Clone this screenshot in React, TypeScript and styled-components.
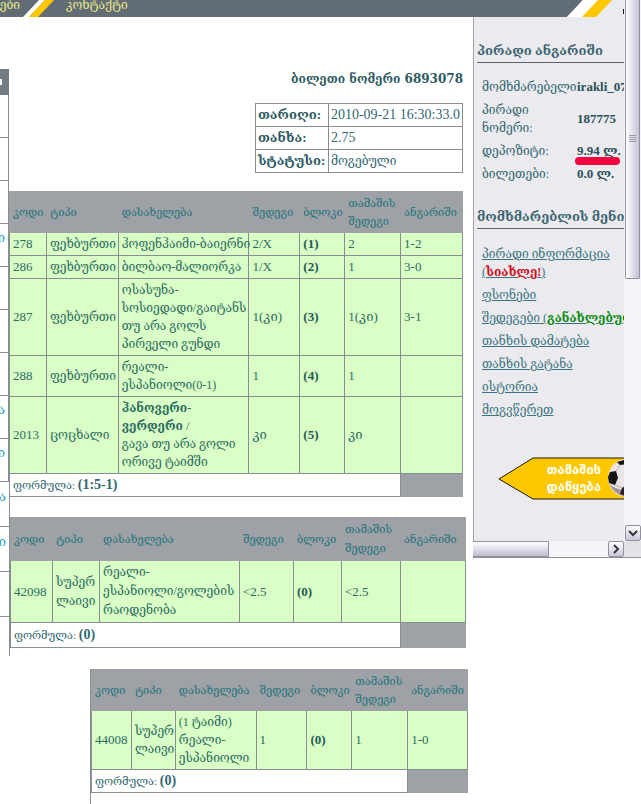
import React from 'react';
import styled, { createGlobalStyle } from 'styled-components';

const Global = createGlobalStyle`
  * { box-sizing: border-box; }
  body {
    margin: 0;
    background: #fff;
    color: #32676f;
    font-family: "Liberation Serif", "DejaVu Serif", serif;
    font-size: 13px;
    line-height: 18px;
    overflow-x: hidden;
  }
`;

const line = '#868e94';

const Page = styled.div`
  display: flex;
  align-items: flex-start;
`;

const Left = styled.div`
  flex: 1;
  min-width: 0;
`;

const Nav = styled.nav`
  display: flex;
  height: 17px;
  background: #626c74;
  overflow: hidden;
`;

const NavLink = styled.a<{ $cut?: boolean }>`
  display: flex;
  justify-content: ${p => (p.$cut ? 'flex-end' : 'flex-start')};
  width: ${p => (p.$cut ? '20px' : 'auto')};
  margin-left: ${p => (p.$cut ? '0' : '12px')};
  color: #e9e88a;
  font-size: 12px;
  line-height: 10px;
  text-decoration: none;
  white-space: nowrap;
`;

const Slash = styled.svg`
  display: block;
  flex: none;
`;

const Body = styled.div`
  display: flex;
`;

const Strip = styled.div`
  flex: 0 0 9px;
  width: 9px;
  padding-top: 52px;
`;

const StripHead = styled.div`
  display: flex;
  justify-content: flex-start;
  align-items: center;
  height: 26px;
  background: #747c83;

  &::before {
    content: '';
    width: 2px;
    height: 6px;
    background: #fff;
  }
`;

const StripCell = styled.div<{ $tall?: boolean }>`
  display: flex;
  align-items: center;
  justify-content: flex-end;
  width: ${p => (p.$tall ? '10px' : '9px')};
  height: ${p => (p.$tall ? '45px' : '43px')};
  padding: 0 3px 14px 0;
  border-right: 1px solid ${line};
  border-bottom: 1px solid ${line};
  color: #2aa0b8;
  overflow: hidden;
  &:last-child { border-bottom: 0; height: 39px; }
`;

const Main = styled.main`
  flex: 1;
  min-width: 0;
  padding-top: 53px;
`;

const Title = styled.h1`
  margin: 0 10px 15px;
  font-family: "DejaVu Serif", serif;
  font-size: 12px;
  line-height: 18px;
  font-weight: bold;
  text-align: right;
  color: #2d5a63;
`;

const Info = styled.table`
  margin: 0 10px 18px auto;
  border-collapse: collapse;

  th, td {
    padding: 2px;
    border: 1px solid ${line};
    text-align: left;
    white-space: nowrap;
  }
  th { width: 73px; color: #2d5a63; }
  td { font-size: 12px; }
`;

const DateText = styled.time`
  font-size: 14px;
`;

const Block = styled.section<{ $indent?: number; $right: number; $after: number }>`
  padding-right: ${p => p.$right}px;
  padding-bottom: ${p => p.$after}px;
  margin-left: ${p => p.$indent ?? 0}px;
`;

const LinedBlock = styled(Block)`
  border-left: 1px solid ${line};
`;

const Ticket = styled.table<{ $line?: number }>`
  width: 100%;
  table-layout: fixed;
  border-collapse: collapse;
  font-size: 12px;
  line-height: ${p => p.$line ?? 18}px;
`;

const Col = styled.col<{ $share: number }>`
  width: ${p => p.$share * 100}%;
`;

const Th = styled.th`
  padding: 2px 3px;
  border: 1px solid #9ea2a6;
  background: #9ea2a6;
  color: #23737d;
  font-size: 11px;
  font-weight: normal;
  text-align: left;
  white-space: pre-line;
`;

const Td = styled.td<{ $bold?: boolean; $num?: boolean }>`
  padding: 2px 3px;
  border: 1px solid ${line};
  background: #d9ffc6;
  font-size: ${p => (p.$num ? 13 : 12)}px;
  font-weight: ${p => (p.$bold ? 'bold' : 'normal')};
  color: ${p => (p.$bold ? '#235a53' : '#2c6b5f')};
  white-space: pre;
`;

const Formula = styled.td`
  padding: 2px 3px;
  border: 1px solid ${line};
  font-size: 11px;

  b { font-size: 14px; }
`;

const Blank = styled.td`
  border: 1px solid #9ea2a6;
  background: #9ea2a6;
`;

const Frame = styled.aside`
  display: grid;
  grid-template-columns: minmax(0, 1fr) 17px;
  flex: 0 0 168px;
  border-bottom: 1px solid #8f8f98;
`;

const View = styled.div`
  min-width: 0;
  overflow: hidden;
  background: #ebebef;
`;

const Banner = styled.svg`
  display: block;
  width: 100%;
  height: 17px;
`;

const Panel = styled.div`
  padding: 25px 0 41px 3px;
  border-left: 1px solid #a2a3a9;
  white-space: nowrap;
`;

const Heading = styled.h2`
  margin: 0 0 13px;
  padding: 0 0 2px;
  border-bottom: 1px solid #59636c;
  color: #3d6470;
  font-size: 13px;
  line-height: 18px;
`;

const Account = styled.table`
  width: 100%;
  margin-bottom: 22px;
  border-collapse: collapse;
  table-layout: fixed;

  th {
    width: 100px;
    padding: 2px 0 3px 5px;
    font-weight: normal;
    text-align: left;
    font-size: 12px;
  }
  td {
    padding: 2px 0 3px;
    font-weight: bold;
    color: #2c4f5a;
  }
`;

const Marked = styled.span`
  position: relative;
  &::after {
    content: '';
    position: absolute;
    left: -2px;
    top: 14px;
    width: 45px;
    height: 8px;
    border-radius: 4px;
    background: #f5053f;
  }
`;

const Menu = styled.ul`
  margin: 14px 0 35px;
  padding: 0 0 0 5px;
  list-style: none;
  font-size: 12px;

  li { padding: 2px 0 3px; }
`;

const MenuLink = styled.a`
  color: #3a7480;
  text-decoration: underline;
  white-space: pre;
`;

const Tag = styled.b<{ $tone: string }>`
  color: ${p => p.$tone};
`;

const Play = styled.button`
  display: block;
  width: 150px;
  height: 43px;
  margin-left: 21px;
  padding: 0;
  border: 0;
  background: none;
  cursor: pointer;
`;

const VBar = styled.div`
  display: flex;
  flex-direction: column;
  padding-left: 1px;
  background: #f4f4fa;
`;

const VThumb = styled.div`
  display: flex;
  align-items: center;
  justify-content: center;
  width: 15px;
  height: 279px;
  margin-bottom: auto;
  border: 1px solid #92929f;
  border-top: 0;
  border-radius: 0 0 2px 2px;
  background: linear-gradient(90deg, #fff, #e4e3ee 45%, #c3c2d5);
`;

const HBar = styled.div`
  display: flex;
  justify-content: space-between;
  height: 16px;
  background: #f4f4fa;
`;

const HThumb = styled.div`
  width: 76px;
  border: 1px solid #92929f;
  border-left: 0;
  background: linear-gradient(#fff, #dddce8 55%, #bebdcc);
`;

const Corner = styled.div`
  background: #e2e2e7;
`;

const Arrow = styled.button`
  display: flex;
  align-items: center;
  justify-content: center;
  width: 16px;
  height: 16px;
  padding: 0;
  border: 1px solid #92929f;
  border-radius: 2px;
  background: linear-gradient(#fff, #c9c8d8);
`;

type Row = { cells: React.ReactNode[] };

const heads = ['კოდი', 'ტიპი', 'დასახელება', 'შედეგი', 'ბლოკი', 'თამაშის\nშედეგი', 'ანგარიში'];

function TicketTable({ cols, rows, formula, lineHeight }: { cols: number[]; rows: Row[]; formula: string; lineHeight?: number }) {
  const total = cols.reduce((a, b) => a + b, 0);
  return (
    <Ticket $line={lineHeight}>
      <colgroup>{cols.map((w, i) => <Col key={i} $share={w / total} />)}</colgroup>
      <thead>
        <tr>{heads.map(h => <Th key={h} scope="col">{h}</Th>)}</tr>
      </thead>
      <tbody>
        {rows.map((r, i) => (
          <tr key={i}>
            {r.cells.map((c, j) => <Td key={j} $bold={j === 4} $num={j === 0 || j > 2}>{c}</Td>)}
          </tr>
        ))}
        <tr>
          <Formula colSpan={6}>ფორმულა: <b>{formula}</b></Formula>
          <Blank />
        </tr>
      </tbody>
    </Ticket>
  );
}

const mainRows: Row[] = [
  { cells: ['278', 'ფეხბურთი', 'ჰოფენჰაიმი-ბაიერნი', '2/X', '(1)', '2', '1-2'] },
  { cells: ['286', 'ფეხბურთი', 'ბილბაო-მალიორკა', '1/X', '(2)', '1', '3-0'] },
  { cells: ['287', 'ფეხბურთი', 'ოსასუნა-\nსოსიედადი/გაიტანს\nთუ არა გოლს\nპირველი გუნდი', '1(კი)', '(3)', '1(კი)', '3-1'] },
  { cells: ['288', 'ფეხბურთი', 'რეალი-\nესპანიოლი(0-1)', '1', '(4)', '1', ''] },
  { cells: ['2013', 'ცოცხალი', <><b>{'ჰანოვერი-\nვერდერი'}</b>{' /\nგავა თუ არა გოლი\nორივე ტაიმში'}</>, 'კი', '(5)', 'კი', ''] },
];

export default function App() {
  return (
    <>
      <Global />
      <Page>
        <Left>
          <Nav>
            <NavLink href="#rules" $cut>ები</NavLink>
            <Slash width="34" height="17" viewBox="20 0 34 17">
              <path d="M39 0H45L29 17H23Z" fill="#fff" />
              <path d="M45 0H54L38 17H29Z" fill="#fdc800" />
            </Slash>
            <NavLink href="#contact">კონტაქტი</NavLink>
          </Nav>
          <Body>
            <Strip>
              <StripHead />
              <StripCell /><StripCell /><StripCell />
              <StripCell>ი</StripCell>
              <StripCell /><StripCell /><StripCell />
              <StripCell>ა</StripCell>
              <StripCell>ი</StripCell>
              <StripCell $tall>ა</StripCell>
              <StripCell $tall>ი</StripCell>
              <StripCell $tall />
              <StripCell $tall />
            </Strip>
            <Main>
              <Title>ბილეთი ნომერი 6893078</Title>
              <Info>
                <tbody>
                  <tr><th scope="row">თარიღი:</th><td><DateText>2010-09-21 16:30:33.0</DateText></td></tr>
                  <tr><th scope="row">თანხა:</th><td><DateText as="span">2.75</DateText></td></tr>
                  <tr><th scope="row">სტატუსი:</th><td>მოგებული</td></tr>
                </tbody>
              </Info>
              <Block $right={10} $after={20}>
                <TicketTable cols={[37, 72, 131, 51, 45, 56, 62]} rows={mainRows} formula="(1:5-1)" />
              </Block>
              <Block $indent={1} $right={7} $after={21}>
                <TicketTable
                  lineHeight={19}
                  cols={[42, 47, 140, 54, 48, 59, 65]}
                  rows={[{ cells: ['42098', 'სუპერ\nლაივი', 'რეალი-\nესპანიოლი/გოლების\nრაოდენობა', '<2.5', '(0)', '<2.5', ''] }]}
                  formula="(0)"
                />
              </Block>
              <LinedBlock $indent={81} $right={5} $after={11}>
                <TicketTable
                  cols={[40, 44, 81, 51, 45, 56, 60]}
                  rows={[{ cells: ['44008', 'სუპერ\nლაივი', '(1 ტაიმი)\nრეალი-\nესპანიოლი', '1', '(0)', '1', '1-0'] }]}
                  formula="(0)"
                />
              </LinedBlock>
            </Main>
          </Body>
        </Left>

        <Frame>
          <View>
            <Banner viewBox="0 0 151 17" preserveAspectRatio="none">
              <path d="M0 0H110L94 17H0Z" fill="#626c74" />
              <path d="M110 0H125L109 17H94Z" fill="#fff" />
              <path d="M125 0H139L123 17H109Z" fill="#fdc800" />
              <path d="M150 9H151V14H150Z" fill="#111" />
            </Banner>
            <Panel>
              <Heading>პირადი ანგარიში</Heading>
              <Account>
                <tbody>
                  <tr><th scope="row">მომხმარებელი</th><td>irakli_07</td></tr>
                  <tr><th scope="row">პირადი<br />ნომერი:</th><td>187775</td></tr>
                  <tr><th scope="row">დეპოზიტი:</th><td><Marked>9.94 ლ.</Marked></td></tr>
                  <tr><th scope="row">ბილეთები:</th><td>0.0 ლ.</td></tr>
                </tbody>
              </Account>
              <Heading>მომხმარებლის მენიუ</Heading>
              <Menu>
                <li><MenuLink href="#info">{'პირადი ინფორმაცია\n('}<Tag $tone="#cf0a18">სიახლე!</Tag>)</MenuLink></li>
                <li><MenuLink href="#bets">ფსონები</MenuLink></li>
                <li><MenuLink href="#results">შედეგები (<Tag $tone="#0a8a14">განახლებული</Tag>)</MenuLink></li>
                <li><MenuLink href="#deposit">თანხის დამატება</MenuLink></li>
                <li><MenuLink href="#withdraw">თანხის გატანა</MenuLink></li>
                <li><MenuLink href="#history">ისტორია</MenuLink></li>
                <li><MenuLink href="#write">მოგვწერეთ</MenuLink></li>
              </Menu>
              <Play type="button">
                <svg width="150" height="43" viewBox="0 0 150 43">
                  <path d="M35 1H149V42H35L1 22Z" fill="#fdc800" stroke="#1c1a10" />
                  <g fill="#fff" fontFamily="DejaVu Sans" fontWeight="bold" fontSize="13" textAnchor="middle">
                    <text x="76" y="17">თამაშის</text>
                    <text x="76" y="34">დაწყება</text>
                  </g>
                  <circle cx="129" cy="21" r="19" fill="#e9e4e6" />
                  <path d="M111 27Q118 39 129 40V34Q119 33 111 27Z" fill="#a48f98" />
                  <path d="M112 15L118 14L120 21L117 28L111 26L110 20Z" fill="#151515" />
                  <path d="M119 5L129 2V7L122 8Z" fill="#151515" />
                  <path d="M124 31L129 28V39L122 37Z" fill="#2a1b20" />
                  <path d="M118 14L122 8M117 28L124 31" stroke="#b5adb0" fill="none" />
                </svg>
              </Play>
            </Panel>
          </View>
          <VBar>
            <VThumb>
              <svg width="7" height="8" viewBox="0 0 7 8" aria-hidden="true">
                <path d="M0 .5H7M0 2.5H7M0 4.5H7M0 6.5H7" stroke="#9c9bab" />
              </svg>
            </VThumb>
            <Arrow type="button" aria-label="Scroll down">
              <svg width="10" height="8" viewBox="0 0 10 8"><path d="M1 2L5 6L9 2" fill="none" stroke="#33343d" strokeWidth="2" /></svg>
            </Arrow>
          </VBar>
          <HBar>
            <HThumb />
            <Arrow type="button" aria-label="Scroll right">
              <svg width="8" height="10" viewBox="0 0 8 10"><path d="M2 1L6 5L2 9" fill="none" stroke="#33343d" strokeWidth="2" /></svg>
            </Arrow>
          </HBar>
          <Corner />
        </Frame>
      </Page>
    </>
  );
}
